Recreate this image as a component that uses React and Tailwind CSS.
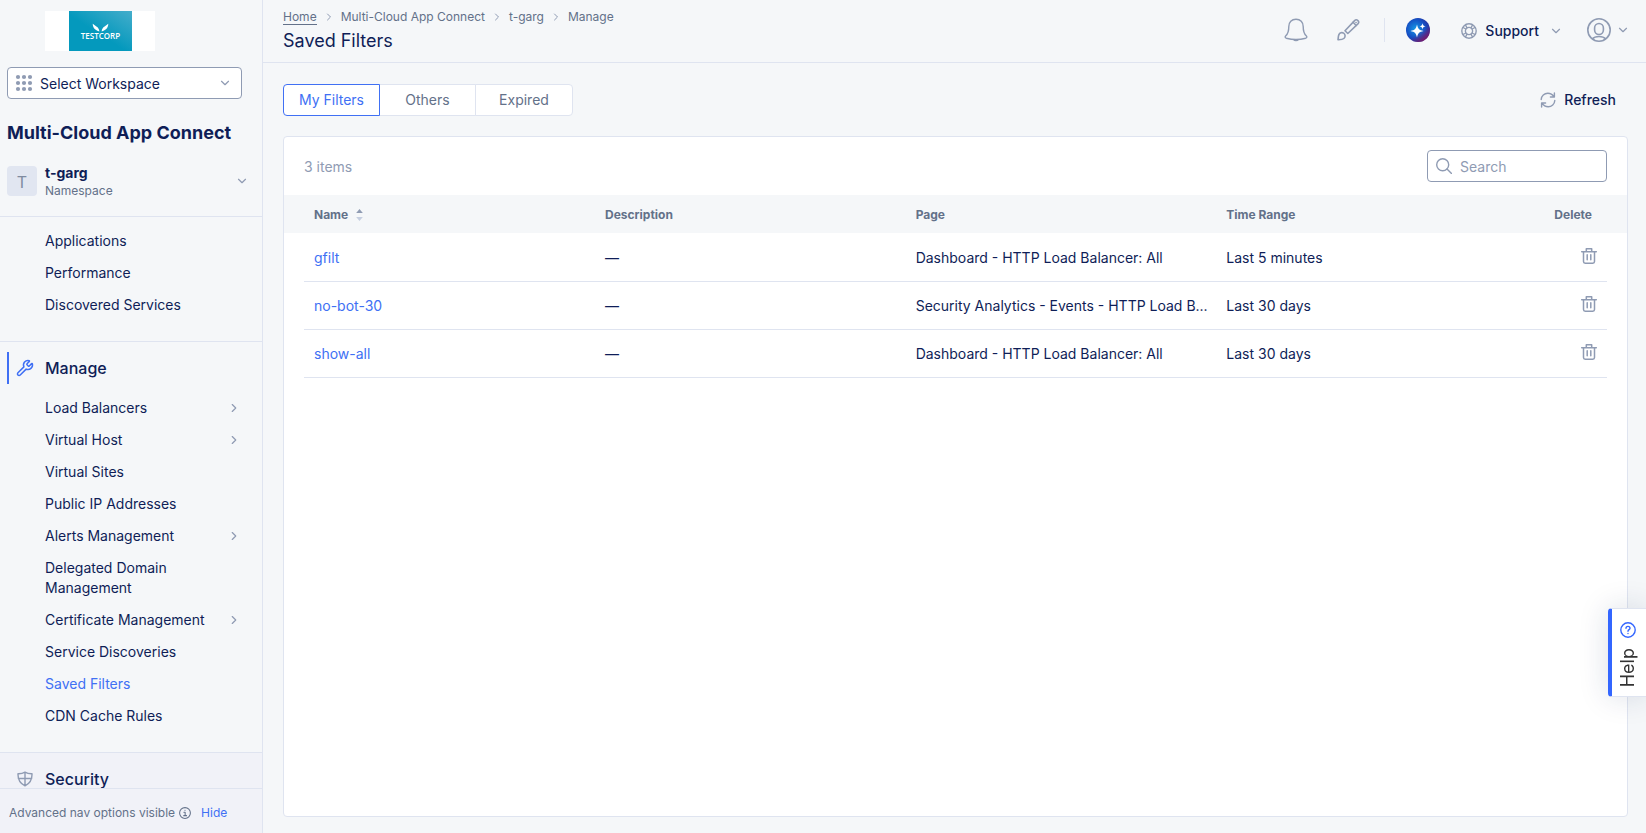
import { useState } from "react";
import { ChevronDown, ChevronRight, Wrench } from "lucide-react";

const overviewItems = ["Applications", "Performance", "Discovered Services"];

const manageItems = [
  { label: "Load Balancers", children: true },
  { label: "Virtual Host", children: true },
  { label: "Virtual Sites" },
  { label: "Public IP Addresses" },
  { label: "Alerts Management", children: true },
  { label: "Delegated Domain Management" },
  { label: "Certificate Management", children: true },
  { label: "Service Discoveries" },
  { label: "Saved Filters", active: true },
  { label: "CDN Cache Rules" },
];

const tabs = ["My Filters", "Others", "Expired"];

const filters = [
  { name: "gfilt", page: "Dashboard - HTTP Load Balancer: All", range: "Last 5 minutes" },
  { name: "no-bot-30", page: "Security Analytics - Events - HTTP Load B...", range: "Last 30 days" },
  { name: "show-all", page: "Dashboard - HTTP Load Balancer: All", range: "Last 30 days" },
];

function Icon({ size = 16, box = 16, width = 1.4, className = "", children }) {
  return (
    <svg
      width={size}
      height={size}
      viewBox={`0 0 ${box} ${box}`}
      fill="none"
      stroke="currentColor"
      strokeWidth={width}
      strokeLinecap="round"
      strokeLinejoin="round"
      className={`shrink-0 ${className}`}
      aria-hidden="true"
    >
      {children}
    </svg>
  );
}

function Logo() {
  return (
    <div className="ml-[38px] flex h-10 w-[110px] justify-center bg-white">
      <svg width="63" height="40" viewBox="0 0 63 40" role="img" aria-label="Testcorp">
        <defs>
          <linearGradient id="logo-bg" x1="0" y1="1" x2="1" y2="0">
            <stop offset="0.45" stopColor="#0499bd" />
            <stop offset="1" stopColor="#45adcb" />
          </linearGradient>
        </defs>
        <rect width="63" height="40" fill="url(#logo-bg)" />
        <path d="M23.700 12.700c.2 4 2.300 6.500 6.700 7.800-.3-2.500-1.300-4-3-5z" fill="#fff" />
        <path d="M39.300 12.700c-.2 4-2.300 6.500-6.700 7.800.3-2.500 1.300-4 3-5z" fill="#fff" />
        <text x="31.500" y="28" textAnchor="middle" fontSize="8" fontWeight="600" fill="#fff" fontFamily="'Open Sans', sans-serif">
          TESTCORP
        </text>
      </svg>
    </div>
  );
}

function NavItem({ label, children, active }) {
  return (
    <li>
      <a href="#" className={`flex items-center py-[6px] pr-[21px] pl-[45px] ${active ? "text-[#4070f4]" : ""}`}>
        <span className="flex-1">
          <span className="block max-w-40">{label}</span>
        </span>
        {children && <ChevronRight size={14} className="shrink-0 text-[#8f9bb3]" />}
      </a>
    </li>
  );
}

function Sidebar() {
  return (
    <aside className="flex w-[263px] shrink-0 flex-col border-r border-[#dfe4f0] leading-5">
      <div className="px-[7px] pt-[11px] pb-[17px]">
        <Logo />
        <button className="mt-4 flex h-8 w-[235px] items-center rounded-[4px] border border-[#8f9bb3] bg-white px-[7px]">
          <svg width="18" height="18" viewBox="0 0 18 18" fill="#8f9bb3" aria-hidden="true">
            {[3, 9, 15].map((y) => [3, 9, 15].map((x) => <circle key={`${x}-${y}`} cx={x} cy={y} r="2.100" />))}
          </svg>
          <span className="ml-[7px] flex-1 pt-[2px] text-left">Select Workspace</span>
          <ChevronDown size={14} className="mr-[2px] text-[#8f9bb3]" />
        </button>
        <h2 className="mt-[22px] text-lg leading-6 font-bold">Multi-Cloud App Connect</h2>
        <button className="mt-[18px] flex w-full items-center text-left">
          <span className="flex size-[30px] items-center justify-center rounded-[4px] bg-[#e1e6f1] pt-[2px] text-base text-[#7f8ba0]">T</span>
          <span className="ml-2 flex-1">
            <span className="block leading-5 font-bold">t-garg</span>
            <span className="block text-xs leading-4 text-[#637189]">Namespace</span>
          </span>
          <ChevronDown size={14} className="mr-[6px] text-[#8f9bb3]" />
        </button>
      </div>
      <nav className="min-h-0 flex-1 overflow-hidden">
        <ul className="border-t border-[#dfe4f0] pt-2 pb-5">
          {overviewItems.map((label) => (
            <NavItem key={label} label={label} />
          ))}
        </ul>
        <section className="border-t border-[#dfe4f0] pt-[10px] pb-5">
          <h3 className="ml-[7px] flex h-8 items-center border-l-2 border-[#4070f4] pl-[7px] text-base font-medium">
            <Wrench size={18} strokeWidth={2} className="mr-[11px] text-[#4070f4]" />
            Manage
          </h3>
          <ul className="mt-2">
            {manageItems.map((item) => (
              <NavItem key={item.label} label={item.label} active={item.active}>
                {item.children}
              </NavItem>
            ))}
          </ul>
        </section>
        <section className="border-t border-[#dfe4f0] bg-[#f1f2f8] pt-[10px] pb-5">
          <h3 className="flex h-8 items-center pl-[17px] text-base font-medium">
            <Icon className="mr-3 text-[#8f9bb3]">
              <path d="M8 1.200c2 1.200 4.300 1.700 7 1.600.2 5.500-1.800 9.700-7 12-5.200-2.300-7.200-6.500-7-12 2.700.1 5-.4 7-1.600zM8 1.200v13.600M1.300 7.500h13.400" />
            </Icon>
            Security
          </h3>
        </section>
      </nav>
      <div className="flex h-[45px] shrink-0 items-center border-t border-[#dfe4f0] bg-[#f1f2f8] pt-[3px] pl-[9px] text-xs text-[#637189]">
        Advanced nav options visible
        <Icon size={12} className="mr-[10px] ml-1 text-[#637189]">
          <circle cx="8" cy="8" r="7.200" />
          <path d="M6.500 7h1.700v4.500M6.300 11.500h3.800M7.900 4.400h.2" />
        </Icon>
        <button className="text-[#4070f4]">Hide</button>
      </div>
    </aside>
  );
}

function Header() {
  return (
    <header className="flex h-[63px] shrink-0 items-center border-b border-[#dfe4f0] pr-4 pl-5">
      <div className="flex-1">
        <ol className="flex items-center gap-[6px] text-xs leading-4 text-[#637189]">
          <li>
            <a href="#" className="border-b border-[#637189]">Home</a>
          </li>
          <ChevronRight size={12} className="text-[#8f9bb3]" />
          <li>Multi-Cloud App Connect</li>
          <ChevronRight size={12} className="text-[#8f9bb3]" />
          <li>t-garg</li>
          <ChevronRight size={12} className="text-[#8f9bb3]" />
          <li>Manage</li>
        </ol>
        <h1 className="mt-1 text-lg leading-6">Saved Filters</h1>
      </div>
      <div className="flex items-center pb-[2px] text-[#8f9bb3]">
        <button aria-label="Notifications">
          <Icon size={24} box={24}>
            <path d="M12 1.200c-4.400 0-7.200 3-7.200 7.300 0 5.500-1 7.500-3 9.300-1 .9-.8 2 .5 2.400 5.500 1.500 13.900 1.500 19.400 0 1.300-.4 1.500-1.500.5-2.400-2-1.800-3-3.800-3-9.300 0-4.300-2.800-7.300-7.200-7.300z" />
            <path d="M9.700 21.600c.8 1.300 3.800 1.300 4.600 0z" fill="currentColor" />
          </Icon>
        </button>
        <button aria-label="Theme" className="ml-7">
          <Icon size={24} box={24} width={1.600}>
            <path d="M9 12.700 18.600 2.600a2.300 2.300 0 0 1 3.300 3.300L11.800 15.500z" />
            <path d="M17 4.300l3.200 3.200M20 4.500h.1" />
            <path d="M2 21.800c.3-2 .2-3.500.9-5.200.8-1.900 3-2.500 4.700-1.400 2 1.300 1.900 4 .3 5.300-1.500 1.200-3.700 1.200-5.900 1.300z" />
          </Icon>
        </button>
        <span className="mr-[21px] ml-6 h-6 w-px bg-[#dfe4f0]" />
        <button aria-label="Assistant">
          <svg width="24" height="24" viewBox="0 0 24 24" aria-hidden="true">
            <defs>
              <radialGradient id="ai-bg" cx="0.4" cy="0.45" r="0.65">
                <stop offset="0" stopColor="#1598e6" />
                <stop offset="0.6" stopColor="#1550c4" />
                <stop offset="1" stopColor="#2a2796" />
              </radialGradient>
              <linearGradient id="ai-edge" x1="0.3" y1="0.3" x2="0.8" y2="1">
                <stop offset="0.45" stopColor="#8a1560" stopOpacity="0" />
                <stop offset="1" stopColor="#8a1560" />
              </linearGradient>
            </defs>
            <circle cx="12" cy="12" r="12" fill="url(#ai-bg)" />
            <circle cx="12" cy="12" r="12" fill="url(#ai-edge)" />
            <path d="M11 6.500c1 4.300 2 5.500 6.500 6.500-4.500 1-5.500 2.200-6.500 6.500-1-4.300-2-5.500-6.500-6.500 4.500-1 5.500-2.200 6.500-6.500z" fill="#fff" />
            <path d="M16.500 5.200c.5 2.100 1 2.600 3 3.100-2 .5-2.500 1-3 3.100-.5-2.100-1-2.600-3-3.100 2-.5 2.500-1 3-3.100z" fill="#fff" />
          </svg>
        </button>
        <button className="ml-[31px] flex items-center pt-[2px]">
          <Icon>
            <circle cx="8" cy="8" r="7.200" />
            <circle cx="8" cy="8" r="3.600" />
            <path d="M2 4.500 4.900 6M4.500 2 6 4.900M14 4.500 11.100 6M11.500 2 10 4.900M2 11.500 4.900 10M4.500 14 6 11.100M14 11.500 11.100 10M11.500 14 10 11.100" />
          </Icon>
          <span className="ml-2 text-sm leading-5 font-medium text-[#0f1e57]">Support</span>
          <ChevronDown size={14} className="ml-[10px]" />
        </button>
        <button aria-label="Account" className="ml-6 flex items-center gap-[5px]">
          <Icon size={24} box={24} width={1.600}>
            <circle cx="12" cy="12" r="11.200" />
            <rect x="7.600" y="5.500" width="8.800" height="11" rx="4.400" />
            <path d="M5.500 20.800c2.500-3 10.500-3 13 0" />
          </Icon>
          <ChevronDown size={14} />
        </button>
      </div>
    </header>
  );
}

function FiltersTable() {
  return (
    <table className="w-full table-fixed text-left">
      <colgroup>
        <col className="w-[291px]" />
        <col />
        <col />
        <col />
        <col className="w-20" />
      </colgroup>
      <thead>
        <tr className="h-[38px] bg-[#f5f7f9] text-xs text-[#637189] shadow-[20px_0_#f5f7f9,-20px_0_#f5f7f9]">
          <th className="px-[10px] pt-[2px] font-bold">
            <button className="flex items-center gap-2 font-bold">
              Name
              <svg width="7" height="12" viewBox="0 0 7 12" aria-hidden="true">
                <path d="M3.500 0 6.800 4H.2z" fill="#8f9bb3" />
                <path d="M3.500 12 6.800 8H.2z" fill="#c5cee0" />
              </svg>
            </button>
          </th>
          <th className="px-[10px] pt-[2px] font-bold">Description</th>
          <th className="px-[10px] pt-[2px] font-bold">Page</th>
          <th className="px-[10px] pt-[2px] font-bold">Time Range</th>
          <th className="pt-[2px] pr-[15px] text-right font-bold">Delete</th>
        </tr>
      </thead>
      <tbody>
        {filters.map((f) => (
          <tr key={f.name} className="h-12 border-b border-[#dfe4f0]">
            <td className="px-[10px] pt-[2px]">
              <a href="#" className="text-[#4070f4]">{f.name}</a>
            </td>
            <td className="px-[10px] pt-[2px]">—</td>
            <td className="pt-[2px] pl-[10px] whitespace-nowrap">{f.page}</td>
            <td className="px-[10px] pt-[2px]">{f.range}</td>
            <td className="pr-[10px] pb-[2px]">
              <button aria-label={`Delete ${f.name}`} className="ml-auto block text-[#8f9bb3]">
                <Icon width={1.500}>
                  <path d="M.7 3.700h14.600M5.300 3.500V.8h5.400v2.700M2.500 3.900v9.600c0 1 .7 1.700 1.700 1.700h7.600c1 0 1.700-.7 1.700-1.700V3.900M6.200 6.800v5M9.800 6.800v5" />
                </Icon>
              </button>
            </td>
          </tr>
        ))}
      </tbody>
    </table>
  );
}

export default function App() {
  const [tab, setTab] = useState("My Filters");

  return (
    <div className="flex h-screen overflow-hidden bg-[#f5f7f9] font-[Inter,sans-serif] text-sm leading-5 text-[#0f1e57]">
      <Sidebar />
      <div className="flex min-w-0 flex-1 flex-col">
        <Header />
        <main className="flex min-h-0 flex-1 flex-col pt-[21px] pr-[18px] pb-4 pl-5">
          <div className="flex items-center justify-between">
            <div className="flex">
              {tabs.map((t) => (
                <button
                  key={t}
                  onClick={() => setTab(t)}
                  className={`-mr-px h-8 w-[97px] border bg-white first:rounded-l-[4px] last:w-[98px] last:rounded-r-[4px] ${
                    t === tab ? "relative border-[#4070f4] text-[#4070f4]" : "border-[#dfe4f0] text-[#637189]"
                  }`}
                >
                  {t}
                </button>
              ))}
            </div>
            <button className="flex items-center gap-2 pr-3 font-medium">
              <Icon className="text-[#8f9bb3]">
                <path d="M1.200 7.500C1.400 3.800 4.300 1.300 7.800 1.300c2.500 0 4.700 1.200 6 3.300M14.400 1v4h-4M14.800 8.500c-.2 3.700-3.100 6.200-6.600 6.200-2.500 0-4.700-1.200-6-3.300M1.600 15v-4h4" />
              </Icon>
              Refresh
            </button>
          </div>
          <div className="mt-5 min-h-0 flex-1 rounded-[4px] border border-[#dfe4f0] bg-white px-5">
            <div className="flex h-[58px] items-center justify-between">
              <span className="pt-[2px] text-[#8f9bb3]">3 items</span>
              <label className="flex h-8 w-[180px] items-center rounded-[4px] border border-[#8f9bb3] px-2 text-[#8f9bb3]">
                <Icon>
                  <circle cx="6.700" cy="6.700" r="6" />
                  <path d="m11 11 4.500 4.500" />
                </Icon>
                <input
                  type="search"
                  aria-label="Search"
                  placeholder="Search"
                  className="ml-2 w-full bg-transparent pt-[2px] text-[#0f1e57] outline-none placeholder:text-[#8f9bb3]"
                />
              </label>
            </div>
            <FiltersTable />
          </div>
        </main>
      </div>
      <button className="fixed right-0 bottom-[136px] flex w-[38px] flex-col items-center gap-[10px] rounded-l-[4px] border-y border-l-4 border-y-[#dfe4f0] border-l-[#3366ff] bg-white pt-[13px] pr-[2px] pb-[9px] text-[#333] shadow-[0_0_30px_rgba(20,40,90,0.15)]">
        <Icon className="text-[#3366ff]" width={1.400}>
          <circle cx="8" cy="8" r="7.200" />
          <path d="M6 6.300c0-1.200.9-1.900 2-1.900s2 .7 2 1.800c0 1.400-2 1.500-2 3M8 11.500v.1" />
        </Icon>
        <span className="rotate-180 text-lg leading-5 [writing-mode:vertical-rl]">Help</span>
      </button>
    </div>
  );
}
